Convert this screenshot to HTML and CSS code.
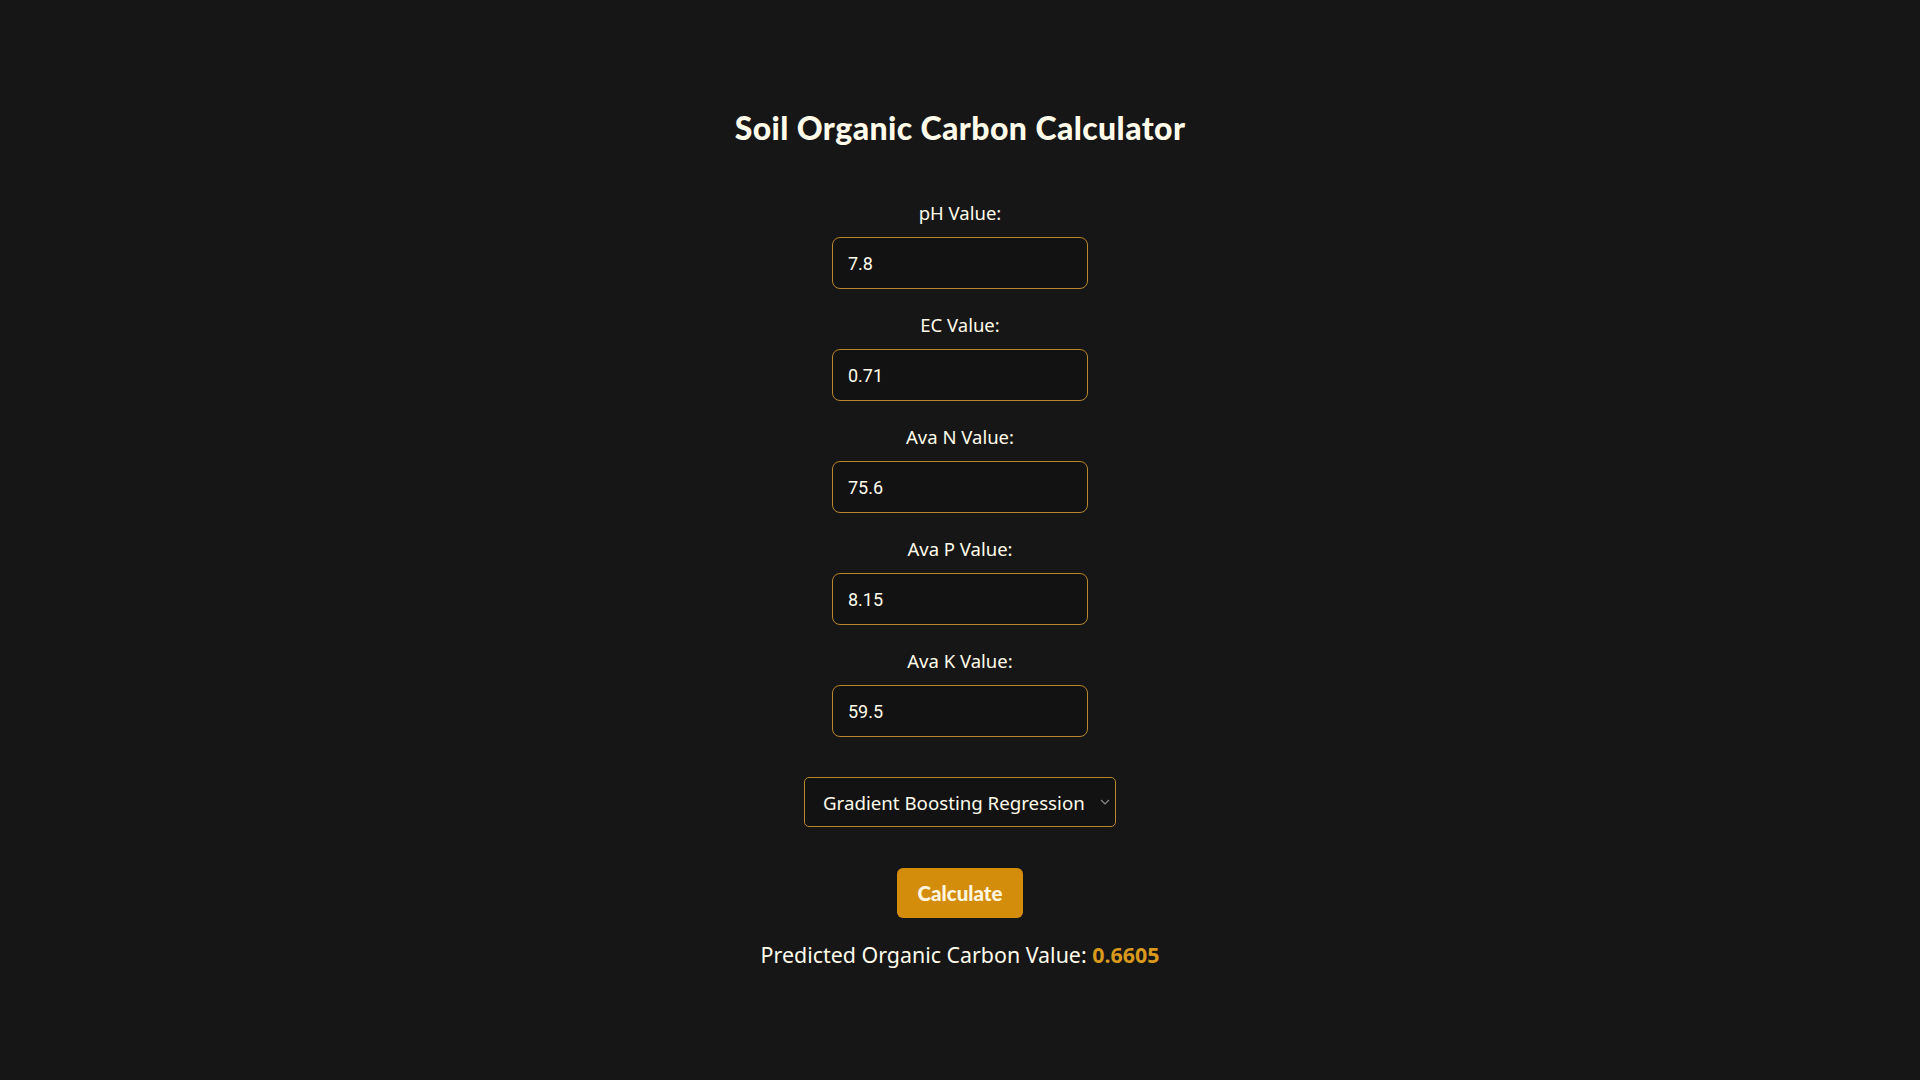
FILE: index.html
```html
<!DOCTYPE html>
<html lang="en">
<head>
<meta charset="utf-8">
<title>Soil Organic Carbon Calculator</title>
<link rel="stylesheet" href="styles.css">
</head>
<body>
<main class="app">
  <h1 class="title">Soil Organic Carbon Calculator</h1>
  <form class="form">
    <div class="field">
      <label class="label" for="ph">pH Value:</label>
      <input class="input" id="ph" type="text" value="7.8">
    </div>
    <div class="field">
      <label class="label" for="ec">EC Value:</label>
      <input class="input" id="ec" type="text" value="0.71">
    </div>
    <div class="field">
      <label class="label" for="n">Ava N Value:</label>
      <input class="input" id="n" type="text" value="75.6">
    </div>
    <div class="field">
      <label class="label" for="p">Ava P Value:</label>
      <input class="input" id="p" type="text" value="8.15">
    </div>
    <div class="field">
      <label class="label" for="k">Ava K Value:</label>
      <input class="input" id="k" type="text" value="59.5">
    </div>
    <div class="select-wrap">
      <select class="select">
        <option>Gradient Boosting Regression</option>
      </select>
      <svg class="chevron" width="10" height="6" viewBox="0 0 10 6"><path d="M1 1l4 4 4-4" fill="none" stroke="#8a8a8a" stroke-width="1.2"/></svg>
    </div>
    <button class="button" type="button">Calculate</button>
  </form>
  <p class="result">Predicted Organic Carbon Value: <span class="result-value">0.6605</span></p>
</main>
</body>
</html>
```
FILE: styles.css
```css
html, body {
  margin: 0;
  padding: 0;
  background: #161616;
  color: #fffbea;
}
body {
  font-family: "Noto Sans", "Open Sans", sans-serif;
}
.app {
  display: flex;
  flex-direction: column;
  align-items: center;
  padding-top: 110px;
}
.title {
  margin: 0;
  font-family: Lato, sans-serif;
  font-weight: 900;
  font-size: 32px;
  letter-spacing: 0.4px;
  line-height: 36px;
  color: #fffbea;
}
.form {
  display: flex;
  flex-direction: column;
  align-items: center;
  margin-top: 55px;
}
.field {
  display: flex;
  flex-direction: column;
  align-items: center;
  gap: 12px;
  margin-bottom: 24px;
}
.label {
  font-size: 18.5px;
  line-height: 24px;
  color: #fffbea;
}
.input {
  box-sizing: border-box;
  width: 256px;
  height: 52px;
  padding: 0 15px;
  background: #121212;
  border: 1px solid #b8862c;
  border-radius: 8px;
  color: #fffbea;
  font-family: Roboto, Arial, sans-serif;
  font-size: 18px;
  outline: none;
}
.select-wrap {
  position: relative;
  margin-top: 16px;
}
.select {
  -webkit-appearance: none;
  appearance: none;
  box-sizing: border-box;
  width: 312px;
  height: 50px;
  padding: 0 18px;
  background: #121212;
  border: 1px solid #b8862c;
  border-radius: 5px;
  color: #fffbea;
  font-family: "Noto Sans", "Open Sans", sans-serif;
  font-size: 18.7px;
  outline: none;
}
.chevron {
  position: absolute;
  right: 6px;
  top: 22px;
}
.button {
  margin-top: 41px;
  width: 126px;
  height: 50px;
  background: #d48d0b;
  border: none;
  border-radius: 6px;
  color: #fff6e0;
  font-family: Lato, sans-serif;
  font-weight: 900;
  font-size: 20.5px;
  cursor: pointer;
}
.result {
  margin: 23px 0 0;
  font-size: 21.4px;
  line-height: 28px;
  color: #fffbea;
}
.result-value {
  color: #d99a1c;
  font-weight: 700;
}
```
